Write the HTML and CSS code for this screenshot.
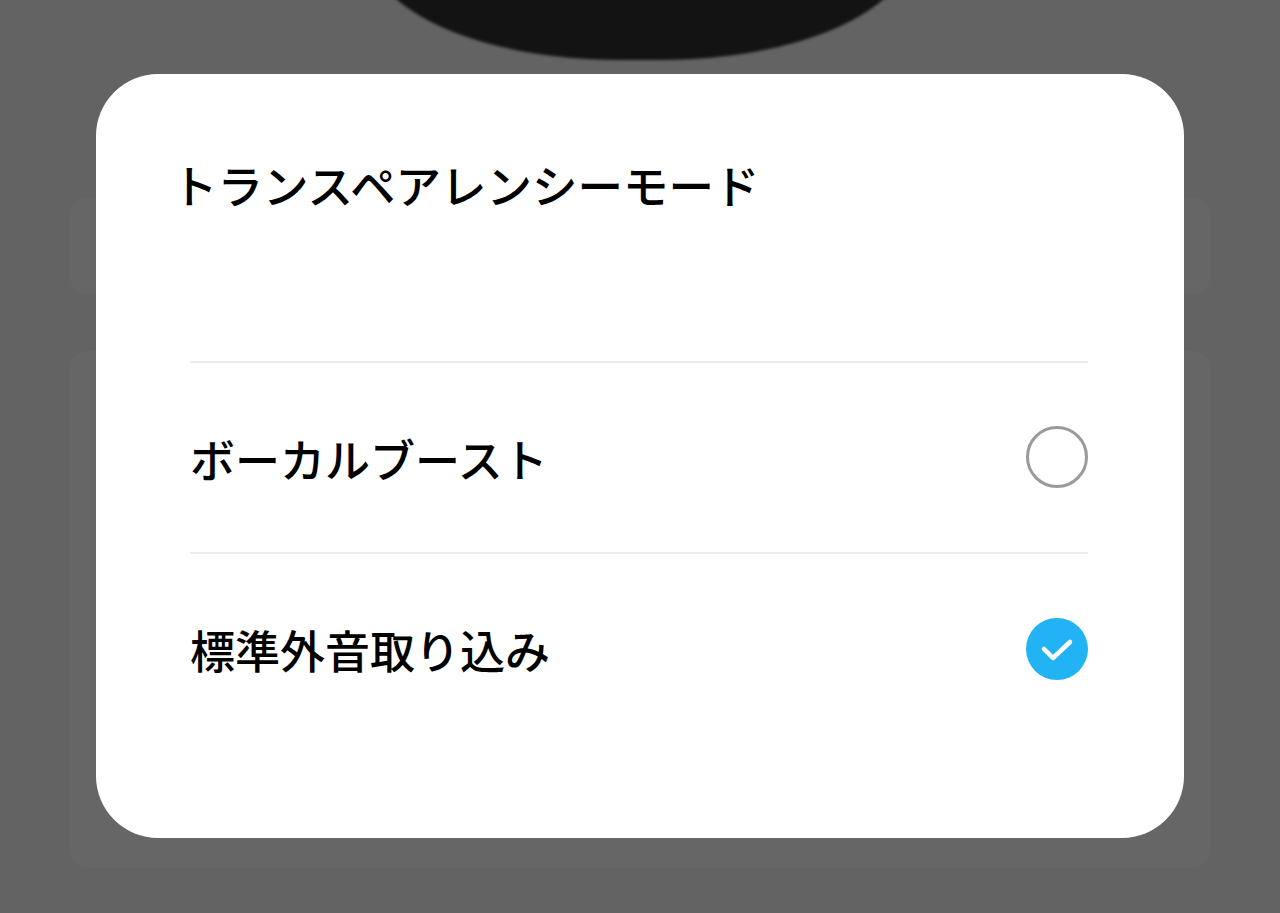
FILE: index.html
```html
<!DOCTYPE html>
<html lang="ja">

<head>
  <meta charset="UTF-8">
  <meta name="viewport" content="width=device-width, initial-scale=1.0">
  <title>トランスペアレンシーモード</title>
  <link rel="stylesheet" href="styles.css">
</head>

<body>
  <div class="backdrop">
    <div class="case"></div>
    <div class="card card-top"></div>
    <div class="card card-main"></div>
  </div>

  <div class="dialog">
    <h1 class="dialog-title">トランスペアレンシーモード</h1>
    <div class="option">
      <span class="option-label">ボーカルブースト</span>
      <span class="radio"></span>
    </div>
    <div class="option">
      <span class="option-label">標準外音取り込み</span>
      <span class="radio checked">
        <svg viewBox="0 0 62 62" width="62" height="62">
          <path d="M18 31 L27 40 L44 24" fill="none" stroke="#fff" stroke-width="4.5" stroke-linecap="round" stroke-linejoin="round" />
        </svg>
      </span>
    </div>
  </div>
</body>

</html>
```

FILE: styles.css
```css
html,
body {
  margin: 0;
  padding: 0;
  height: 100%;
}

body {
  position: relative;
  overflow: hidden;
  background-color: #636363;
  font-family: "Noto Sans CJK JP", "Noto Sans", sans-serif;
  color: #000;
}

.backdrop {
  display: flex;
  flex-direction: column;
  align-items: center;
  padding: 0 70px;
}

.case {
  width: 540px;
  height: 160px;
  margin-top: -100px;
  background-color: #131313;
  border-radius: 0 0 250px 250px / 0 0 110px 110px;
  filter: blur(1.5px);
}

.card {
  align-self: stretch;
  background-color: #666666;
  border-radius: 16px;
}

.card-top {
  height: 96px;
  margin-top: 138px;
}

.card-main {
  height: 517px;
  margin-top: 57px;
}

/* 弹窗 */
.dialog {
  position: absolute;
  top: 74px;
  left: 96px;
  width: 1088px;
  height: 764px;
  box-sizing: border-box;
  padding: 0 96px 0 94px;
  background-color: #fff;
  border-radius: 62px;
}

.dialog-title {
  margin: 0 0 0 -18px;
  padding-top: 80px;
  height: 207px;
  font-size: 45.5px;
  font-weight: 500;
  line-height: 60px;
}

.option {
  display: flex;
  align-items: center;
  justify-content: space-between;
  height: 189px;
  border-top: 2px solid #ececec;
}

.option-label {
  font-size: 45px;
  font-weight: 500;
  line-height: 60px;
  padding-top: 3px;
}

.radio {
  display: flex;
  align-items: center;
  justify-content: center;
  width: 62px;
  height: 62px;
  box-sizing: border-box;
  border: 3px solid #9a9a9a;
  border-radius: 50%;
  margin-top: -2px;
}

.radio.checked {
  border: none;
  background-color: #22b3f4;
  margin-top: 0;
}
```
